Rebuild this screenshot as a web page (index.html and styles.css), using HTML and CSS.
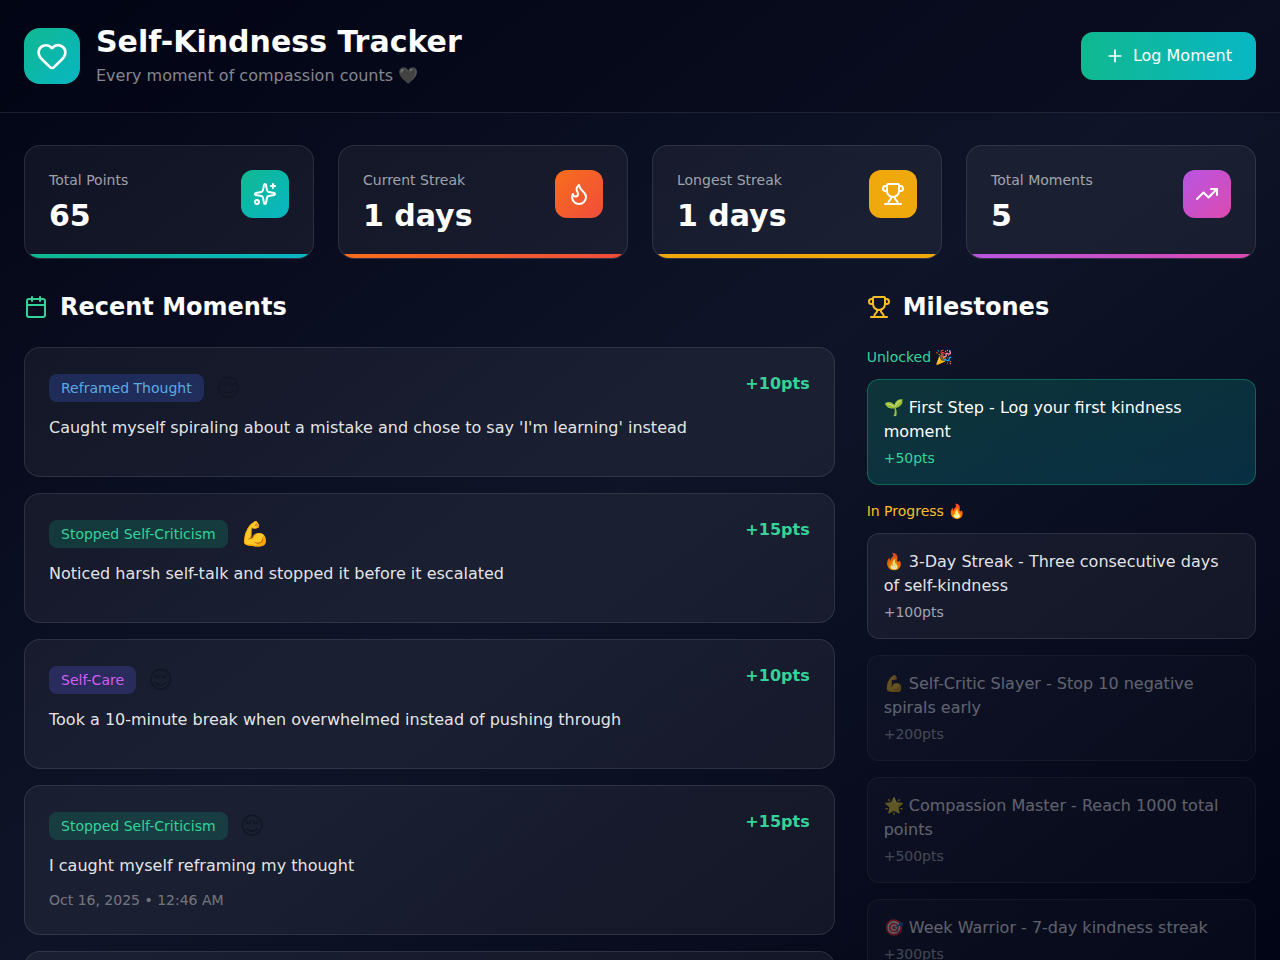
FILE: index.html
```html
<!DOCTYPE html>
<html lang="en">
<head>
    <meta charset="UTF-8">
    <meta name="viewport" content="width=device-width, initial-scale=1.0">
    <title>Self-Kindness Tracker</title>
    <link rel="stylesheet" href="styles.css">
</head>
<body>
    <header class="header">
        <div class="brand">
            <div class="logo">
                <svg class="icon icon-lg" viewBox="0 0 24 24"><path d="M2 9.5a5.5 5.5 0 0 1 9.591-3.676.56.56 0 0 0 .818 0A5.49 5.49 0 0 1 22 9.5c0 2.29-1.5 4-3 5.5l-5.492 5.313a2 2 0 0 1-3 .019L5 15c-1.5-1.5-3-3.2-3-5.5"/></svg>
            </div>
            <div>
                <h1>Self-Kindness Tracker</h1>
                <p class="tagline">Every moment of compassion counts 🖤</p>
            </div>
        </div>
        <button type="button" class="log-btn">
            <svg class="icon icon-sm" viewBox="0 0 24 24"><path d="M5 12h14M12 5v14"/></svg>
            Log Moment
        </button>
    </header>

    <main class="main">
        <section class="stats">
            <div class="stat">
                <div>
                    <p class="stat-label">Total Points</p>
                    <p class="stat-value">65</p>
                </div>
                <div class="stat-icon green">
                    <svg class="icon" viewBox="0 0 24 24"><path d="M11.017 2.814a1 1 0 0 1 1.966 0l1.051 5.558a2 2 0 0 0 1.594 1.594l5.558 1.051a1 1 0 0 1 0 1.966l-5.558 1.051a2 2 0 0 0-1.594 1.594l-1.051 5.558a1 1 0 0 1-1.966 0l-1.051-5.558a2 2 0 0 0-1.594-1.594l-5.558-1.051a1 1 0 0 1 0-1.966l5.558-1.051a2 2 0 0 0 1.594-1.594z"/><path d="M20 2v4M22 4h-4"/><circle cx="4" cy="20" r="2"/></svg>
                </div>
                <span class="stat-bar green"></span>
            </div>
            <div class="stat">
                <div>
                    <p class="stat-label">Current Streak</p>
                    <p class="stat-value">1 days</p>
                </div>
                <div class="stat-icon orange">
                    <svg class="icon" viewBox="0 0 24 24"><path d="M8.5 14.5A2.5 2.5 0 0 0 11 12c0-1.38-.5-2-1-3-1.072-2.143-.224-4.054 2-6 .5 2.5 2 4.9 4 6.5 2 1.6 3 3.5 3 5.5a7 7 0 1 1-14 0c0-1.153.433-2.294 1-3a2.5 2.5 0 0 0 2.5 2.5z"/></svg>
                </div>
                <span class="stat-bar orange"></span>
            </div>
            <div class="stat">
                <div>
                    <p class="stat-label">Longest Streak</p>
                    <p class="stat-value">1 days</p>
                </div>
                <div class="stat-icon amber">
                    <svg class="icon" viewBox="0 0 24 24"><path d="M10 14.66v1.626a2 2 0 0 1-.976 1.696A5 5 0 0 0 7 21.978M14 14.66v1.626a2 2 0 0 0 .976 1.696A5 5 0 0 1 17 21.978M18 9h1.5a1 1 0 0 0 0-5H18M4 22h16M6 9a6 6 0 0 0 12 0V3a1 1 0 0 0-1-1H7a1 1 0 0 0-1 1zM6 9H4.5a1 1 0 0 1 0-5H6"/></svg>
                </div>
                <span class="stat-bar amber"></span>
            </div>
            <div class="stat">
                <div>
                    <p class="stat-label">Total Moments</p>
                    <p class="stat-value">5</p>
                </div>
                <div class="stat-icon purple">
                    <svg class="icon" viewBox="0 0 24 24"><path d="M16 7h6v6"/><path d="m22 7-8.5 8.5-5-5L2 17"/></svg>
                </div>
                <span class="stat-bar purple"></span>
            </div>
        </section>

        <div class="columns">
            <section class="moments">
                <h2>
                    <svg class="icon icon-green" viewBox="0 0 24 24"><path d="M8 2v4M16 2v4M3 10h18"/><rect x="3" y="4" width="18" height="18" rx="2"/></svg>
                    Recent Moments
                </h2>
                <div class="list">
                    <article class="moment">
                        <div class="moment-top">
                            <span class="badge badge-blue">Reframed Thought</span>
                            <span class="mood">😌</span>
                            <span class="points">+10pts</span>
                        </div>
                        <p class="moment-text">Caught myself spiraling about a mistake and chose to say 'I'm learning' instead</p>
                        <p class="moment-date"></p>
                    </article>
                    <article class="moment">
                        <div class="moment-top">
                            <span class="badge badge-green">Stopped Self-Criticism</span>
                            <span class="mood">💪</span>
                            <span class="points">+15pts</span>
                        </div>
                        <p class="moment-text">Noticed harsh self-talk and stopped it before it escalated</p>
                        <p class="moment-date"></p>
                    </article>
                    <article class="moment">
                        <div class="moment-top">
                            <span class="badge badge-purple">Self-Care</span>
                            <span class="mood">😌</span>
                            <span class="points">+10pts</span>
                        </div>
                        <p class="moment-text">Took a 10-minute break when overwhelmed instead of pushing through</p>
                        <p class="moment-date"></p>
                    </article>
                    <article class="moment">
                        <div class="moment-top">
                            <span class="badge badge-green">Stopped Self-Criticism</span>
                            <span class="mood">😌</span>
                            <span class="points">+15pts</span>
                        </div>
                        <p class="moment-text">I caught myself reframing my thought</p>
                        <p class="moment-date">Oct 16, 2025 • 12:46 AM</p>
                    </article>
                    <article class="moment">
                        <div class="moment-top"></div>
                    </article>
                </div>
            </section>

            <aside class="milestones">
                <h2>
                    <svg class="icon icon-amber" viewBox="0 0 24 24"><path d="M10 14.66v1.626a2 2 0 0 1-.976 1.696A5 5 0 0 0 7 21.978M14 14.66v1.626a2 2 0 0 0 .976 1.696A5 5 0 0 1 17 21.978M18 9h1.5a1 1 0 0 0 0-5H18M4 22h16M6 9a6 6 0 0 0 12 0V3a1 1 0 0 0-1-1H7a1 1 0 0 0-1 1zM6 9H4.5a1 1 0 0 1 0-5H6"/></svg>
                    Milestones
                </h2>
                <div class="list">
                    <div>
                        <h3 class="unlocked-title">Unlocked 🎉</h3>
                        <div class="milestone unlocked">
                            <p class="milestone-name">🌱 First Step - Log your first kindness moment</p>
                            <p class="milestone-points">+50pts</p>
                        </div>
                    </div>
                    <div>
                        <h3 class="progress-title">In Progress 🔥</h3>
                        <div class="milestone">
                            <p class="milestone-name">🔥 3-Day Streak - Three consecutive days of self-kindness</p>
                            <p class="milestone-points">+100pts</p>
                        </div>
                    </div>
                    <div class="milestone locked">
                        <p class="milestone-name">💪 Self-Critic Slayer - Stop 10 negative spirals early</p>
                        <p class="milestone-points">+200pts</p>
                    </div>
                    <div class="milestone locked">
                        <p class="milestone-name">🌟 Compassion Master - Reach 1000 total points</p>
                        <p class="milestone-points">+500pts</p>
                    </div>
                    <div class="milestone locked">
                        <p class="milestone-name">🎯 Week Warrior - 7-day kindness streak</p>
                        <p class="milestone-points">+300pts</p>
                    </div>
                </div>
            </aside>
        </div>
    </main>
</body>
</html>
```
FILE: styles.css
```css
* { box-sizing: border-box; margin: 0; padding: 0; }
html { background: #020617; scrollbar-width: none; }
body {
    font-family: "DejaVu Sans", sans-serif;
    font-size: 16px;
    line-height: 24px;
    color: #121623;
    background: linear-gradient(to bottom right, #020515, #0f1428, #020515) fixed;
}

.icon { width: 24px; height: 24px; flex-shrink: 0; fill: none; stroke: currentColor; stroke-width: 2; stroke-linecap: round; stroke-linejoin: round; }
.icon-lg { width: 32px; height: 32px; }
.icon-sm { width: 20px; height: 20px; }
.icon-green { color: #34d399; }
.icon-amber { color: #fbbf24; }

.green { background: linear-gradient(to bottom right, #10b890, #08b6c4); }
.orange { background: linear-gradient(to bottom right, #f86e1c, #f04c3c); }
.amber { background: #efa90d; }
.purple { background: linear-gradient(to bottom right, #b855e2, #dc4ab0); }

/* header */
.header {
    display: flex;
    justify-content: space-between;
    align-items: center;
    padding: 24px;
    border-bottom: 1px solid rgba(255, 255, 255, 0.1);
    background: rgba(2, 5, 21, 0.4);
}
.brand { display: flex; align-items: center; gap: 16px; }
.logo {
    display: flex;
    align-items: center;
    justify-content: center;
    width: 56px;
    height: 56px;
    border-radius: 16px;
    color: #fff;
    background: linear-gradient(to bottom right, #10b890, #08b6c4);
}
h1 { font-size: 30px; line-height: 36px; color: #fff; }
.tagline { margin-top: 4px; color: #84868e; }
.log-btn {
    display: flex;
    align-items: center;
    gap: 8px;
    padding: 12px 24px;
    border: none;
    border-radius: 12px;
    font: inherit;
    color: #fff;
    background: linear-gradient(to right, #10b890, #08b6c4);
    cursor: pointer;
}

/* stat cards */
.main { padding: 32px 24px; }
.stats { display: grid; grid-template-columns: repeat(4, 1fr); gap: 24px; margin-bottom: 32px; }
.stat {
    position: relative;
    display: flex;
    justify-content: space-between;
    align-items: flex-start;
    padding: 24px;
    border: 1px solid rgba(255, 255, 255, 0.1);
    border-radius: 16px;
    background: rgba(255, 255, 255, 0.05);
    overflow: hidden;
}
.stat-label { margin-bottom: 8px; font-size: 14px; line-height: 20px; color: rgba(255, 255, 255, 0.6); }
.stat-value { font-size: 30px; line-height: 36px; font-weight: bold; color: #fff; }
.stat-icon { display: flex; align-items: center; justify-content: center; width: 48px; height: 48px; border-radius: 12px; color: #fff; }
.stat-bar { position: absolute; left: 0; right: 0; bottom: 0; height: 4px; }
.stat-bar.green { background: linear-gradient(to right, #10b890, #08b6c4); }
.stat-bar.orange { background: linear-gradient(to right, #f86e1c, #f04c3c); }
.stat-bar.purple { background: linear-gradient(to right, #b855e2, #dc4ab0); }

/* columns */
.columns { display: grid; grid-template-columns: repeat(3, 1fr); gap: 32px; }
.moments { grid-column: span 2; }
h2 { display: flex; align-items: center; gap: 12px; margin-bottom: 24px; font-size: 24px; line-height: 32px; color: #fff; }
.list { display: flex; flex-direction: column; gap: 16px; }

.moment {
    padding: 24px;
    border: 1px solid rgba(255, 255, 255, 0.1);
    border-radius: 16px;
    background: rgba(255, 255, 255, 0.05);
}
.moment-top { display: flex; align-items: center; gap: 12px; margin-bottom: 12px; }
.badge { padding: 4px 12px; border-radius: 8px; font-size: 14px; line-height: 20px; }
.badge-blue { color: #5aaae4; background: rgba(59, 90, 200, 0.3); }
.badge-green { color: #34d399; background: rgba(16, 185, 129, 0.2); }
.badge-purple { color: #d05ff0; background: rgba(80, 80, 200, 0.3); }
.mood { font-size: 24px; line-height: 32px; }
.points { align-self: flex-start; margin-left: auto; font-weight: bold; color: #34d399; }
.moment-text { margin-bottom: 12px; color: rgba(255, 255, 255, 0.9); }
.moment-date { font-size: 14px; line-height: 20px; color: rgba(255, 255, 255, 0.4); }

/* milestones */
h3 { margin-bottom: 12px; font-size: 14px; line-height: 20px; font-weight: normal; }
.unlocked-title { color: #34d399; }
.progress-title { color: #fbbf24; }
.milestone {
    padding: 16px;
    border: 1px solid rgba(255, 255, 255, 0.1);
    border-radius: 12px;
    background: rgba(255, 255, 255, 0.05);
}
.milestone-name { color: rgba(255, 255, 255, 0.9); }
.milestone-points { margin-top: 4px; font-size: 14px; line-height: 20px; color: rgba(255, 255, 255, 0.6); }
.unlocked { border-color: rgba(16, 185, 129, 0.4); background: linear-gradient(to bottom right, rgba(16, 185, 129, 0.2), rgba(6, 182, 212, 0.2)); }
.unlocked .milestone-name { color: #fff; }
.unlocked .milestone-points { color: #34d399; }
.locked { opacity: 0.4; }
```
